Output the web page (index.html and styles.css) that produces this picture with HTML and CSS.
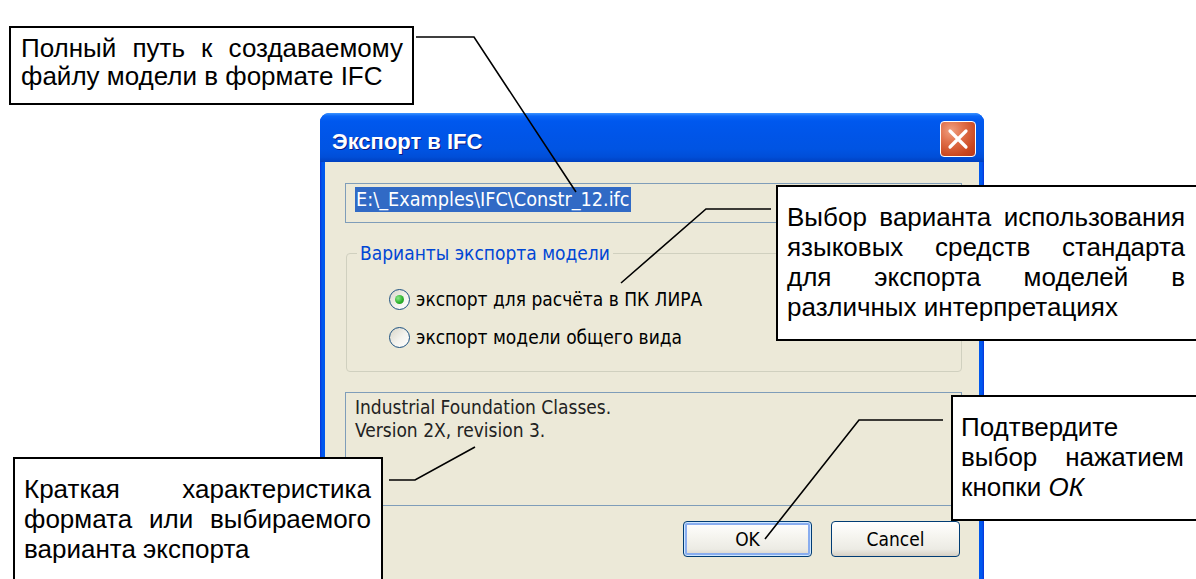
FILE: index.html
```html
<!DOCTYPE html>
<html lang="ru">
<head>
<meta charset="utf-8">
<title>Экспорт в IFC</title>
<link rel="stylesheet" href="styles.css">
</head>
<body>
<div class="stage">
  <div class="dialog">
    <div class="titlebar">
      <span class="title">Экспорт в IFC</span>
      <span class="close" aria-label="Закрыть">
        <svg width="22" height="22" viewBox="0 0 22 22"><path d="M3 3 L19 19 M19 3 L3 19" stroke="#fff" stroke-width="3.2" stroke-linecap="round"/></svg>
      </span>
    </div>
    <div class="body">
      <div class="field"><span class="sel">E:\_Examples\IFC\Constr_12.ifc</span></div>
      <fieldset class="group">
        <legend>Варианты экспорта модели</legend>
        <div class="radios">
          <label class="radio"><span class="dot checked"></span>экспорт для расчёта в ПК ЛИРА</label>
          <label class="radio"><span class="dot"></span>экспорт модели общего вида</label>
        </div>
      </fieldset>
      <div class="desc">Industrial Foundation Classes.<br>Version 2X, revision 3.</div>
      <div class="buttons">
        <button class="btn btn-default">OK</button>
        <button class="btn">Cancel</button>
      </div>
    </div>
  </div>

  <div class="note note-path">Полный путь к создаваемому файлу модели в формате IFC</div>
  <div class="note note-variant">Выбор варианта использования языковых средств стандарта для экспорта моделей в различных интерпретациях</div>
  <div class="note note-desc">Краткая характеристика формата или выбираемого варианта экспорта</div>
  <div class="note note-ok">Подтвердите выбор нажатием <span class="nowrap">кнопки <i>ОК</i></span></div>

  <svg class="leaders" width="1196" height="579" viewBox="0 0 1196 579">
    <polyline points="416,37 474,37 576,192"/>
    <polyline points="771,209 706,209 621,283"/>
    <polyline points="389,480 415,480 475,447"/>
    <polyline points="943,420 859,420 765,539"/>
  </svg>
</div>
</body>
</html>
```
FILE: styles.css
```css
html, body {
  margin: 0;
  padding: 0;
}
body {
  width: 1196px;
  height: 579px;
  overflow: hidden;
  background: #fff;
  font-family: "Liberation Sans", Arial, sans-serif;
}
.stage {
  position: relative;
  width: 1196px;
  height: 579px;
  overflow: hidden;
}

/* ---------- XP dialog ---------- */
.dialog {
  position: absolute;
  left: 320px;
  top: 113px;
  width: 664px;
  height: 480px;
  display: flex;
  flex-direction: column;
  border-radius: 9px 9px 0 0;
  overflow: hidden;
  background: linear-gradient(to right, #0831d9 0, #0058ee 2px, #0058ee calc(100% - 2px), #0831d9 100%);
}
.titlebar {
  flex: none;
  height: 49px;
  display: flex;
  justify-content: space-between;
  align-items: flex-start;
  padding: 0 8px 0 12px;
  background: linear-gradient(to bottom, #3d95ff 0, #0a66f7 3px, #0058ee 8px, #0055e8 22px, #0054e3 36px, #004ed8 44px, #0040c0 49px);
}
.title {
  margin-top: 16px;
  font-family: "Liberation Sans", Arial, sans-serif;
  font-weight: bold;
  font-size: 22px;
  line-height: 26px;
  color: #fff;
  text-shadow: 1px 1px 0 #0a1883;
}
.close {
  margin-top: 8px;
  width: 36px;
  height: 36px;
  box-sizing: border-box;
  border: 1px solid #fff;
  border-radius: 4px;
  background: radial-gradient(circle at 30% 25%, #f0a080 0, #e0704a 35%, #c9461e 75%, #b8381a 100%);
  display: flex;
  align-items: center;
  justify-content: center;
}
.body {
  flex: 1;
  margin: 0 5px;
  background: #ece9d8;
  padding: 21px 17px 0 20px;
  font-family: "DejaVu Sans Condensed", "DejaVu Sans", sans-serif;
  font-size: 19px;
  color: #000;
}
.field {
  height: 40px;
  box-sizing: border-box;
  border: 1px solid #7f9db9;
  padding: 3px 0 0 9px;
}
.sel {
  display: inline-block;
  background: #316ac5;
  color: #fff;
  line-height: 25px;
  font-size: 19.7px;
  padding: 0 1px;
}
.group {
  margin: 19px 0 0 1px;
  padding: 16px 0 15px 0;
  border: 1px solid #d0d0bf;
  border-radius: 4px;
  min-width: 0;
}
.group legend {
  margin-left: 10px;
  padding: 0 3px;
  line-height: 22px;
  color: #0046d5;
}
.radios {
  display: flex;
  flex-direction: column;
  padding-left: 42px;
}
.radio {
  height: 38px;
  display: flex;
  align-items: center;
  gap: 6px;
}
.dot {
  width: 21px;
  height: 21px;
  box-sizing: border-box;
  border: 1px solid #1c5180;
  border-radius: 50%;
  background: linear-gradient(135deg, #d8d5c8 0, #f4f3ee 55%, #ffffff 100%);
  display: flex;
  align-items: center;
  justify-content: center;
}
.dot.checked::after {
  content: "";
  width: 9px;
  height: 9px;
  border-radius: 50%;
  background: radial-gradient(circle at 35% 35%, #8be88a 0, #2fb32f 55%, #1a8c1a 100%);
}
.desc {
  margin-top: 20px;
  height: 114px;
  box-sizing: border-box;
  border: 1px solid #7f9db9;
  padding: 3px 0 0 9px;
  line-height: 23px;
  color: #222;
}
.buttons {
  margin-top: 15px;
  padding-right: 2px;
  display: flex;
  justify-content: flex-end;
  gap: 19px;
}
.btn {
  width: 129px;
  height: 36px;
  box-sizing: border-box;
  border: 1px solid #003c74;
  border-radius: 4px;
  background: linear-gradient(to bottom, #ffffff 0, #f6f5f0 40%, #ecebe4 80%, #d6d0c5 100%);
  font-family: "DejaVu Sans Condensed", "DejaVu Sans", sans-serif;
  font-size: 19px;
  color: #000;
  padding: 0;
}
.btn-default {
  box-shadow: inset 0 0 0 1px #cee7ff, inset 0 0 0 3px #89adef;
}

/* ---------- callout notes ---------- */
.note {
  position: absolute;
  box-sizing: border-box;
  background: #fff;
  border: 2px solid #000;
  font-family: "Liberation Sans", Arial, sans-serif;
  font-size: 26px;
  line-height: 30px;
  text-align: justify;
  color: #000;
}
.nowrap {
  white-space: nowrap;
}
.note-path {
  left: 9px;
  top: 26px;
  width: 405px;
  height: 79px;
  padding: 6px 9px 0 10px;
  line-height: 28px;
}
.note-variant {
  left: 776px;
  top: 185px;
  width: 440px;
  height: 156px;
  padding: 15px 29px 0 9px;
}
.note-desc {
  left: 13px;
  top: 457px;
  width: 370px;
  height: 150px;
  padding: 15px 10px 0 9px;
}
.note-ok {
  left: 951px;
  top: 395px;
  width: 270px;
  height: 126px;
  padding: 15px 35px 0 8px;
}
.leaders {
  position: absolute;
  left: 0;
  top: 0;
  pointer-events: none;
}
.leaders polyline {
  fill: none;
  stroke: #000;
  stroke-width: 1.6;
}
```
